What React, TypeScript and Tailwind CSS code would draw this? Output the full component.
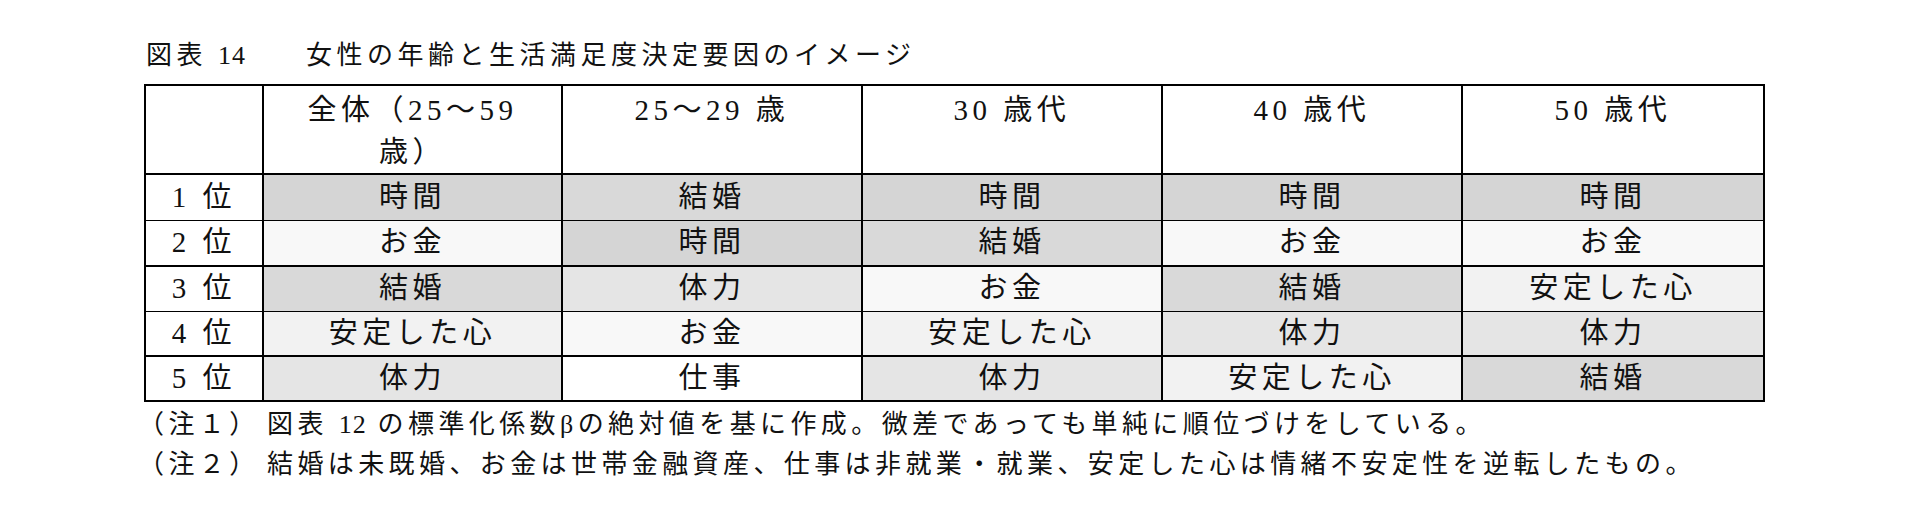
const heads = ["25～29 歳", "30 歳代", "40 歳代", "50 歳代"];

const rows = [
  ["時間", "結婚", "時間", "時間", "時間"],
  ["お金", "時間", "結婚", "お金", "お金"],
  ["結婚", "体力", "お金", "結婚", "安定した心"],
  ["安定した心", "お金", "安定した心", "体力", "体力"],
  ["体力", "仕事", "体力", "安定した心", "結婚"],
];

const shade: Record<string, string> = {
  時間: "bg-[#d5d5d5]",
  結婚: "bg-[#d9d9d9]",
  体力: "bg-[#e5e5e5]",
  安定した心: "bg-[#f2f2f2]",
  お金: "bg-[#f8f8f8]",
  仕事: "bg-white",
};

// row bottom lines: thin, thick, thin, thick, outer
const rowLine = ["border-b", "border-b-2", "border-b", "border-b-2", "border-b-2"];
const rowH = ["h-[46px]", "h-[46px]", "h-[45px]", "h-[45px]", "h-[45px]"];

const App = () => {
  return (
    <div className="w-[1913px] h-[523px] bg-white text-[#111] font-['Liberation_Serif','Noto_Sans_CJK_JP',serif] pt-[38px]">
      <div className="flex ml-[146px] h-[36px] leading-[36px] text-[26px] tracking-[4.5px]">
        <span className="w-[160px]">
          図表 <span className="tracking-[1px]">14</span>
        </span>
        <span>女性の年齢と生活満足度決定要因のイメージ</span>
      </div>

      <table className="ml-[144px] mt-[10px] w-[1619px] table-fixed border-collapse border-2 border-black text-[29px] tracking-[4.5px]">
        <colgroup>
          <col className="w-[118px]" />
          <col className="w-[299px]" />
          <col className="w-[300px]" />
          <col className="w-[300px]" />
          <col className="w-[300px]" />
          <col className="w-[302px]" />
        </colgroup>
        <thead>
          <tr>
            <th className="h-[88px] border-2 border-black font-normal" />
            <th className="h-[88px] border-2 border-black align-top pt-[3px] font-normal leading-[42px] text-center">
              全体（25～59
              <br />
              歳）
            </th>
            {heads.map((h) => (
              <th
                key={h}
                className="h-[88px] border-2 border-black align-top pt-[3px] font-normal leading-[42px] text-center"
              >
                {h}
              </th>
            ))}
          </tr>
        </thead>
        <tbody>
          {rows.map((r, i) => (
            <tr key={i}>
              <td className={`${rowH[i]} ${rowLine[i]} border-x-2 border-black text-center leading-none p-0`}>
                {i + 1} 位
              </td>
              {r.map((c, j) => (
                <td
                  key={j}
                  className={`${rowH[i]} ${rowLine[i]} ${shade[c]} border-x-2 border-black text-center leading-none p-0`}
                >
                  {c}
                </td>
              ))}
            </tr>
          ))}
        </tbody>
      </table>

      <div className="ml-[138px] mt-[3px] text-[26px] leading-[40px] tracking-[4.4px]">
        <div className="flex">
          <span className="w-[129px] shrink-0">（注１）</span>
          <span>
            図表 <span className="tracking-[1px]">12</span> の標準化係数βの絶対値を基に作成。微差であっても単純に順位づけをしている。
          </span>
        </div>
        <div className="flex">
          <span className="w-[129px] shrink-0">（注２）</span>
          <span>結婚は未既婚、お金は世帯金融資産、仕事は非就業・就業、安定した心は情緒不安定性を逆転したもの。</span>
        </div>
      </div>
    </div>
  );
};

export default App;
